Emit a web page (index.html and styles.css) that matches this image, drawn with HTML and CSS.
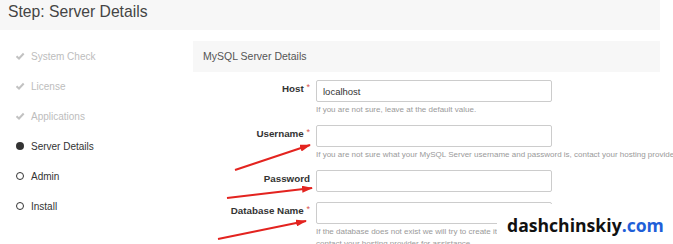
FILE: index.html
```html
<!DOCTYPE html>
<html lang="en">
<head>
  <meta charset="UTF-8" />
  <title>Installer - Server Details</title>
  <link rel="stylesheet" href="styles.css">
</head>
<body>
  <div class="page">
    <div class="step-header">Step: Server Details</div>

    <div class="main">
      <ul class="steps">
        <li class="done">
          <svg class="ico" width="10" height="10" viewBox="0 0 10 10"><polyline points="1.5,5.2 4,7.5 8.7,2.5" fill="none" stroke="#c2c2c2" stroke-width="2"/></svg>
          System Check
        </li>
        <li class="done">
          <svg class="ico" width="10" height="10" viewBox="0 0 10 10"><polyline points="1.5,5.2 4,7.5 8.7,2.5" fill="none" stroke="#c2c2c2" stroke-width="2"/></svg>
          License
        </li>
        <li class="done">
          <svg class="ico" width="10" height="10" viewBox="0 0 10 10"><polyline points="1.5,5.2 4,7.5 8.7,2.5" fill="none" stroke="#c2c2c2" stroke-width="2"/></svg>
          Applications
        </li>
        <li class="current">
          <span class="dot"></span>
          Server Details
        </li>
        <li>
          <span class="ring"></span>
          Admin
        </li>
        <li>
          <span class="ring"></span>
          Install
        </li>
      </ul>

      <div class="panel">
        <div class="panel-heading">MySQL Server Details</div>
        <div class="form">
          <div class="row">
            <label>Host <span class="req">*</span></label>
            <div class="field">
              <input type="text" value="localhost">
              <div class="help">If you are not sure, leave at the default value.</div>
            </div>
          </div>
          <div class="row">
            <label>Username <span class="req">*</span></label>
            <div class="field">
              <input type="text">
              <div class="help">If you are not sure what your MySQL Server username and password is, contact your hosting provider for assistance.</div>
            </div>
          </div>
          <div class="row plain">
            <label>Password</label>
            <div class="field">
              <input type="password">
            </div>
          </div>
          <div class="row">
            <label>Database Name <span class="req">*</span></label>
            <div class="field">
              <input type="text">
              <div class="help">If the database does not exist we will try to create it for you.<br>contact your hosting provider for assistance.</div>
            </div>
          </div>
        </div>
      </div>
    </div>
  </div>

  <svg class="arrows" width="673" height="244" viewBox="0 0 673 244">
    <defs>
      <marker id="head" markerWidth="11" markerHeight="7" refX="10" refY="3.5" orient="auto" markerUnits="userSpaceOnUse">
        <polygon points="0,0 11,3.5 0,7" fill="#e3231f"/>
      </marker>
    </defs>
    <line x1="235" y1="170" x2="310" y2="145" stroke="#e3231f" stroke-width="2" marker-end="url(#head)"/>
    <line x1="227" y1="198" x2="312" y2="188" stroke="#e3231f" stroke-width="2" marker-end="url(#head)"/>
    <line x1="218" y1="239" x2="306" y2="221" stroke="#e3231f" stroke-width="2" marker-end="url(#head)"/>
  </svg>

  <div class="watermark">dashchinskiy<span class="dom">.com</span></div>
</body>
</html>
```

FILE: styles.css
```css
html, body {
  margin: 0;
  padding: 0;
  width: 673px;
  height: 244px;
  overflow: hidden;
  background: #fff;
  font-family: 'Liberation Sans', Arial, sans-serif;
  color: #333;
}

.page {
  width: 660px;
}

.step-header {
  height: 30px;
  line-height: 24px;
  padding-left: 8px;
  background-color: #f7f7f7;
  font-size: 15.7px;
  color: #444;
}

.main {
  display: flex;
  margin-top: 11px;
}

.steps {
  list-style: none;
  margin: 0;
  padding: 0 0 0 16px;
  width: 177px;
  flex-shrink: 0;
}

.steps li {
  display: flex;
  align-items: center;
  gap: 6px;
  height: 30px;
  font-size: 10px;
  color: #333;
}

.steps li.done {
  color: #bdbdbd;
}

.ico {
  width: 10px;
  height: 10px;
  margin-left: -1px;
}

.dot, .ring {
  width: 8px;
  height: 8px;
  border-radius: 50%;
  box-sizing: border-box;
  margin-right: 1px;
}

.dot {
  background-color: #333;
}

.ring {
  border: 1.5px solid #333;
}

.panel {
  flex: 1;
}

.panel-heading {
  height: 31px;
  line-height: 31px;
  padding-left: 10px;
  background-color: #f7f7f7;
  font-size: 10.5px;
  color: #555;
}

.form {
  padding-top: 8px;
}

.row {
  display: grid;
  grid-template-columns: 117px 236px;
  column-gap: 6px;
  margin-bottom: 9px;
}

.row.plain {
  margin-bottom: 10px;
}

.row label {
  display: block;
  height: 22px;
  text-align: right;
  font-size: 9.8px;
  font-weight: bold;
  line-height: 18px;
  color: #333;
  white-space: nowrap;
}

.req {
  position: relative;
  top: -2px;
  color: #d9534f;
  font-weight: normal;
  font-size: 9px;
  line-height: 0;
}

.field input {
  display: block;
  box-sizing: border-box;
  width: 236px;
  height: 22px;
  margin: 0;
  padding: 0 6px;
  border: 1px solid #ccc;
  border-radius: 2px;
  font-family: 'Liberation Sans', Arial, sans-serif;
  font-size: 9.5px;
  color: #333;
  background: #fff;
}

.help {
  margin-top: 2px;
  font-size: 8px;
  line-height: 12px;
  color: #9a9a9a;
  white-space: nowrap;
}

.arrows {
  position: absolute;
  left: 0;
  top: 0;
  pointer-events: none;
}

.watermark {
  position: absolute;
  left: 497px;
  top: 204px;
  width: 166px;
  height: 40px;
  padding-left: 10px;
  background: #fff;
  font-family: 'Open Sans', sans-serif;
  font-weight: bold;
  font-size: 17.6px;
  line-height: 42px;
  color: #111;
}

.dom {
  color: #1f5fd8;
}
```
